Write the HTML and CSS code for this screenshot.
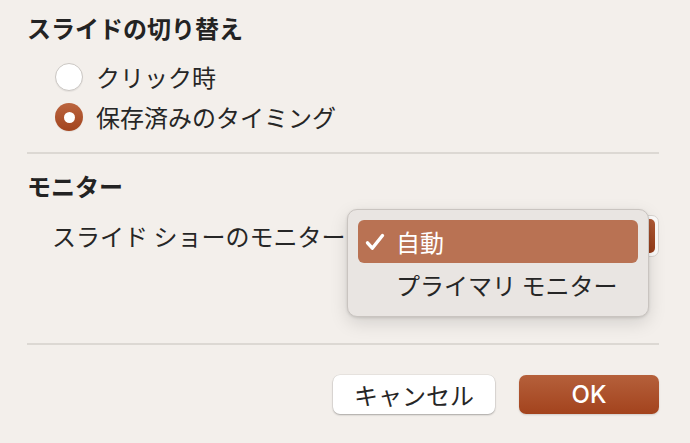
FILE: index.html
```html
<!DOCTYPE html>
<html lang="ja">
<head>
<meta charset="utf-8">
<link rel="stylesheet" href="styles.css">
</head>
<body>
<div class="dialog">
  <h2 class="heading">スライドの切り替え</h2>
  <div class="options">
    <div class="radio-row"><span class="radio"></span><span class="radio-label">クリック時</span></div>
    <div class="radio-row"><span class="radio radio-on"></span><span class="radio-label">保存済みのタイミング</span></div>
  </div>
  <div class="divider"></div>
  <h2 class="heading heading-second">モニター</h2>
  <div class="monitor-row">
    <span class="monitor-label">スライド ショーのモニター</span>
    <div class="select"><span class="select-arrow"></span></div>
    <div class="menu">
      <div class="menu-item menu-item-active">
        <svg class="check" width="20" height="18" viewBox="0 0 20 18"><path d="M2.5 9.8 L7.3 15.2 L17.5 2.5" fill="none" stroke="#fff" stroke-width="3.4" stroke-linecap="round" stroke-linejoin="round"/></svg>
        <span>自動</span>
      </div>
      <div class="menu-item"><span class="check-space"></span><span>プライマリ モニター</span></div>
    </div>
  </div>
  <div class="divider divider-bottom"></div>
  <div class="actions">
    <button class="btn btn-cancel">キャンセル</button>
    <button class="btn btn-ok">OK</button>
  </div>
</div>
</body>
</html>
```

FILE: styles.css
```css
html, body {
  margin: 0;
  padding: 0;
  background: #f3efeb;
}
body {
  width: 690px;
  height: 443px;
  overflow: hidden;
  font-family: "Noto Sans CJK JP", sans-serif;
  color: #262626;
}
.dialog {
  padding: 12px 31px 0 27px;
}
.heading {
  margin: 0;
  font-size: 24px;
  line-height: 32px;
  font-weight: 700;
  color: #232323;
}
.heading-second {
  margin-top: 16px;
}
.options {
  margin-top: 13px;
  padding-left: 28px;
}
.radio-row {
  height: 40px;
  display: flex;
  align-items: center;
  gap: 13px;
}
.radio {
  box-sizing: border-box;
  width: 28px;
  height: 28px;
  border-radius: 50%;
  background: #fff;
  border: 1px solid #cbc7c3;
  box-shadow: 0 1px 1px rgba(0,0,0,0.06);
  display: flex;
  align-items: center;
  justify-content: center;
}
.radio-on {
  border: none;
  background: linear-gradient(#bb653f, #a2441e);
}
.radio-on::after {
  content: "";
  width: 11px;
  height: 11px;
  border-radius: 50%;
  background: #fff;
}
.radio-label {
  font-size: 24px;
  line-height: 32px;
}
.divider {
  margin-top: 15px;
  height: 2px;
  background: #dcd8d3;
}
.divider-bottom {
  margin-top: 86px;
}
.monitor-row {
  position: relative;
  margin-top: 13px;
  height: 42px;
  display: flex;
  align-items: center;
  padding-left: 25px;
}
.monitor-label {
  font-size: 24px;
  line-height: 32px;
  white-space: nowrap;
}
.select {
  box-sizing: border-box;
  margin-left: auto;
  width: 300px;
  height: 42px;
  background: #fdfcfb;
  border: 1px solid #d9d5d1;
  border-radius: 7px;
  display: flex;
  justify-content: flex-end;
  padding: 3px;
}
.select-arrow {
  width: 28px;
  border-radius: 5px;
  background: linear-gradient(#b05a36, #963c19);
}
.menu {
  position: absolute;
  left: 320px;
  top: -6px;
  box-sizing: border-box;
  width: 302px;
  height: 108px;
  padding: 10px 10px 0 10px;
  background: #e9e5e2;
  border: 1px solid #c9c4c0;
  border-radius: 10px;
  box-shadow: 0 6px 18px rgba(0,0,0,0.13), 0 1px 3px rgba(0,0,0,0.12);
}
.menu-item {
  height: 43px;
  display: flex;
  align-items: center;
  padding-left: 7px;
  gap: 11px;
  font-size: 24px;
  line-height: 32px;
  color: #262626;
  border-radius: 6px;
}
.menu-item-active {
  background: #b97253;
  color: #fff;
}
.check {
  display: block;
  width: 20px;
  height: 18px;
}
.check-space {
  width: 20px;
}
.actions {
  margin-top: 30px;
  display: flex;
  justify-content: flex-end;
  gap: 24px;
}
.btn {
  height: 39px;
  border: none;
  border-radius: 7px;
  font-family: "Noto Sans CJK JP", sans-serif;
  font-size: 24px;
  line-height: 32px;
  padding: 0;
  display: flex;
  align-items: center;
  justify-content: center;
}
.btn-cancel {
  width: 162px;
  background: #fff;
  color: #262626;
  box-shadow: 0 1px 2px rgba(0,0,0,0.28), 0 0 0 0.5px rgba(0,0,0,0.08);
}
.btn-ok {
  width: 140px;
  background: linear-gradient(#b5603b, #a3431d);
  color: #fff;
  font-family: "Inter", "Noto Sans CJK JP", sans-serif;
  font-weight: 500;
  box-shadow: 0 1px 2px rgba(0,0,0,0.15);
}
```
